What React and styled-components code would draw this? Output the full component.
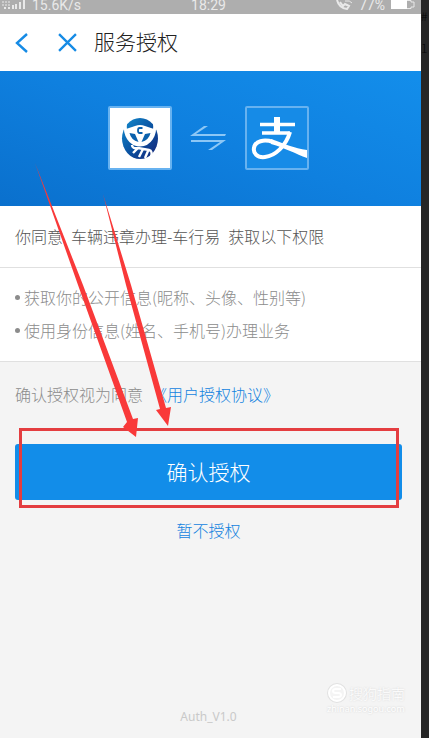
import React from "react";
import styled, { createGlobalStyle } from "styled-components";

const GlobalStyle = createGlobalStyle`
  * { box-sizing: border-box; }
  body {
    margin: 0;
    background: #262626;
    font-family: "Noto Sans CJK SC", "Noto Sans", sans-serif;
    font-weight: 300;
  }
  button { font-family: inherit; font-weight: inherit; }
`;

const Page = styled.div`
  position: relative;
  display: flex;
  min-height: 100vh;
  overflow: hidden;
`;

const Screen = styled.main`
  flex: 1;
  min-width: 0;
  display: flex;
  flex-direction: column;
  background: #f4f4f4;
`;

const Backdrop = styled.aside`
  width: 8px;
  flex: none;
  overflow: hidden;
  background: #262626;
  color: #050505;
  font-size: 12px;
  line-height: 32px;
`;

const StatusBar = styled.header`
  display: grid;
  grid-template-columns: 1fr auto 1fr;
  align-items: start;
  height: 14px;
  padding: 0 6px 0 2px;
  background: #aeaeae;
  color: #e9e9e9;
  font: 400 14px/10px Roboto, sans-serif;
`;

const StatusGroup = styled.div`
  display: flex;
  align-items: center;
  justify-content: ${(p) => (p.$end ? "flex-end" : "flex-start")};
  gap: 6px;
`;

const NavBar = styled.nav`
  display: flex;
  align-items: center;
  height: 57px;
  padding: 0 14px;
  background: #fff;
`;

const IconButton = styled.button`
  display: flex;
  padding: 0;
  margin-right: ${(p) => p.$gap}px;
  border: 0;
  background: none;
  cursor: pointer;
`;

const Title = styled.h1`
  margin: 0;
  padding-bottom: 4px;
  color: #222;
  font-size: 21px;
  line-height: 32px;
  font-weight: 300;
`;

const Banner = styled.section`
  display: flex;
  align-items: center;
  justify-content: center;
  gap: 18px;
  height: 135px;
  padding: 0 4px 2px 0;
  background: linear-gradient(20deg, #0a70cd 0%, #0f80df 50%, #138eeb 100%);
`;

const AppTile = styled.div`
  display: flex;
  width: 64px;
  height: 64px;
  border: 2px solid #67b2f0;
  border-radius: 2px;
  background: ${(p) => p.$fill};
`;

const Permission = styled.section`
  display: flex;
  align-items: center;
  gap: 8px;
  height: 62px;
  padding: 0 15px 2px;
  background: #fff;
  border-bottom: 1px solid #e0e0e0;
  color: #555;
  font-size: 16px;
  line-height: 24px;
  white-space: nowrap;
`;

const Scopes = styled.ul`
  margin: 0;
  padding: 13px 15px 14px;
  list-style: none;
  background: #fff;
  border-bottom: 1px solid #e0e0e0;
`;

const Scope = styled.li`
  display: flex;
  align-items: center;
  gap: 4px;
  color: #8c8c8c;
  font-size: 16px;
  line-height: 33px;
  white-space: nowrap;

  &::before {
    content: "";
    width: 5px;
    height: 5px;
    border-radius: 50%;
    background: #8c8c8c;
  }
`;

const Agreement = styled.p`
  display: flex;
  gap: 8px;
  margin: 0;
  padding: 20px 15px 0;
  color: #8c8c8c;
  font-size: 16px;
  line-height: 24px;
  white-space: nowrap;
`;

const TextLink = styled.a`
  color: #1383df;
  text-decoration: none;
`;

const Actions = styled.section`
  display: flex;
  flex-direction: column;
  align-items: center;
  gap: 18px;
  padding: 38px 19px 0 15px;
`;

const Marked = styled.div`
  position: relative;
  align-self: stretch;

  &::after {
    content: "";
    position: absolute;
    inset: -16px 3px -8px 4px;
    border: 3px solid #e43d40;
    pointer-events: none;
  }
`;

const Primary = styled.button`
  display: block;
  width: 100%;
  height: 56px;
  padding: 0 0 2px;
  border: 0;
  border-radius: 3px;
  background: #128de9;
  color: #fff;
  font-size: 21px;
  cursor: pointer;
`;

const Secondary = styled.button`
  padding: 0;
  border: 0;
  background: none;
  color: #1383df;
  font-size: 16px;
  line-height: 24px;
  cursor: pointer;
`;

const Footer = styled.footer`
  display: grid;
  grid-template-columns: 1fr auto 1fr;
  align-items: end;
  margin-top: auto;
  padding: 0 16px 12px 12px;
`;

const Version = styled.small`
  grid-column: 2;
  color: #c9c9c9;
  font: 400 12px/18px "Noto Sans", sans-serif;
`;

const Watermark = styled.div`
  justify-self: end;
  padding-bottom: 11px;
  color: #fff;
  text-shadow: 0 0 2px #ccc;
  white-space: nowrap;
`;

const Brand = styled.div`
  display: flex;
  align-items: center;
  gap: 2px;
  font-size: 14px;
  line-height: 20px;
`;

const Domain = styled.div`
  font: 400 9px/12px "Noto Sans", sans-serif;
`;

const Arrows = styled.svg`
  position: absolute;
  top: 0;
  left: 0;
  pointer-events: none;
`;

function SteeringLogo() {
  return (
    <svg width="60" height="60" viewBox="0 0 60 60" aria-label="车行易">
      <defs>
        <linearGradient id="wheel" x1="0" y1="0" x2="1" y2="1">
          <stop offset="0" stopColor="#128ed0" />
          <stop offset=".55" stopColor="#0a4e9e" />
          <stop offset="1" stopColor="#1a2576" />
        </linearGradient>
      </defs>
      <ellipse cx="30" cy="30.500" rx="18" ry="20.500" fill="url(#wheel)" />
      <path d="M15.500 15 C14 27 20 37 30 37 C40 37 46 27 44.500 15" fill="none" stroke="#fff" strokeWidth="3" />
      <path d="M16 21 Q22 19 25 18 Q30 16 35 18 Q38 19 44 21 Q42 36 30 37 Q18 36 16 21Z" fill="#fff" />
      <path d="M19.500 25 L25 26 L28.500 34 Q21 32 19.500 25Z M40.500 25 L35 26 L31.500 34 Q39 32 40.500 25Z" fill="#0a61ad" />
      <path d="M32.500 20 H29.500 Q28 20 28 22.500 Q28 25 29.500 25 H32.500" fill="none" stroke="#0a61ad" strokeWidth="1.8" />
      <path d="M22 37 Q22 41 28 40 L39 42 Q43 43 41 49 M28 40 L23 45 M33 41 L29 49 M38 43 L35 50" fill="none" stroke="#fff" strokeWidth="2.400" />
    </svg>
  );
}

function AlipayLogo() {
  return (
    <svg width="60" height="60" viewBox="0 0 60 60" fill="none" stroke="#fff" aria-label="支付宝">
      <path d="M30 9 V24" strokeWidth="6" />
      <path d="M13 16.500 H48 M15 25 H43" strokeWidth="3.5" />
      <path d="M43 24 C39 38 28 48 18 49 C10 50 6 45 7 40 C8 33 17 31 26 34" strokeWidth="4" />
      <path d="M24 31 C38 36 47 40 60 42 V50 C49 46 38 40 24 36Z" fill="#fff" stroke="none" />
    </svg>
  );
}

export default function App() {
  return (
    <>
      <GlobalStyle />
      <Page>
        <Screen>
          <StatusBar>
            <StatusGroup>
              <svg width="24" height="10" viewBox="0 0 24 10" fill="none" stroke="#e9e9e9">
                <path d="M0 2 H9 M0 5 H9" strokeDasharray="2 1" />
                <path d="M2 8 H4 M6 8 H8 M11 9 V5 M14 9 V4" strokeWidth="2" />
                <path d="M18 9 V2 M22 9 V0" strokeWidth="2" />
              </svg>
              <span>15.6K/s</span>
            </StatusGroup>
            <span>18:29</span>
            <StatusGroup $end>
              <svg width="18" height="10" viewBox="0 0 18 10" fill="none" stroke="#e9e9e9" strokeWidth="2">
                <path d="M2 0 Q4 8 12 9 L14 6 L10 4 L8 6 L5 2" />
                <path d="M10 1 Q15 0 17 3" strokeWidth="1" />
              </svg>
              <span>77%</span>
              <svg width="24" height="10" viewBox="0 0 24 10">
                <path d="M0 0 H16 V9 H0Z" fill="#fff" />
                <path d="M16 .5 H20 V2 H23 V7 H20 V8.5 H16" fill="none" stroke="#e9e9e9" />
              </svg>
            </StatusGroup>
          </StatusBar>

          <NavBar>
            <IconButton $gap={28} aria-label="返回">
              <svg width="16" height="20" viewBox="0 0 16 20" fill="none" stroke="#168be5" strokeWidth="2.4">
                <path d="M13 1 L3 10 L13 19" />
              </svg>
            </IconButton>
            <IconButton $gap={17} aria-label="关闭">
              <svg width="19" height="19" viewBox="0 0 18 18" fill="none" stroke="#168be5" strokeWidth="2.2">
                <path d="M1 1 L17 17 M17 1 L1 17" />
              </svg>
            </IconButton>
            <Title>服务授权</Title>
          </NavBar>

          <Banner>
            <AppTile $fill="#fff">
              <SteeringLogo />
            </AppTile>
            <svg width="37" height="26" viewBox="0 0 37 26" fill="#8cc7f6">
              <path d="M36 9 L35 11 H0 L14 1 H18 L6 9Z" />
              <path d="M1 15 H36 L22 25 H18 L30 17 H1Z" />
            </svg>
            <AppTile $fill="#168be7">
              <AlipayLogo />
            </AppTile>
          </Banner>

          <Permission>
            <span>你同意</span>
            <span>车辆违章办理-车行易</span>
            <span>获取以下权限</span>
          </Permission>
          <Scopes>
            <Scope>获取你的公开信息(昵称、头像、性别等)</Scope>
            <Scope>使用身份信息(姓名、手机号)办理业务</Scope>
          </Scopes>

          <Agreement>
            <span>确认授权视为同意</span>
            <TextLink href="#agreement">《用户授权协议》</TextLink>
          </Agreement>
          <Actions>
            <Marked>
              <Primary>确认授权</Primary>
            </Marked>
            <Secondary>暂不授权</Secondary>
          </Actions>

          <Footer>
            <Version>Auth_V1.0</Version>
            <Watermark>
              <Brand>
                <svg width="20" height="20" viewBox="0 0 20 20" fill="none" stroke="#fff" strokeWidth="2">
                  <circle cx="10" cy="10" r="9" stroke="#e2e2e2" />
                  <circle cx="10" cy="10" r="8" />
                  <path d="M14 6 H9 Q6 6 6 8 Q6 10 9 10 H11 Q14 10 14 12 Q14 14 11 14 H6" />
                </svg>
                <span>搜狗指南</span>
              </Brand>
              <Domain>zhinan.sogou.com</Domain>
            </Watermark>
          </Footer>
        </Screen>
        <Backdrop aria-hidden="true">
          <div>#</div>
          <div>1</div>
        </Backdrop>
        <Arrows width="421" height="450" viewBox="0 0 421 450" fill="#f93939" aria-hidden="true">
          <path d="M35 163 L83 285 L133 419 L138 418 L136 437 L123 427 L127 422 L78 285Z" />
          <path d="M103 194 L131 285 L166 408 L171 407 L168 426 L156 410 L160 409 L126 285Z" />
        </Arrows>
      </Page>
    </>
  );
}
